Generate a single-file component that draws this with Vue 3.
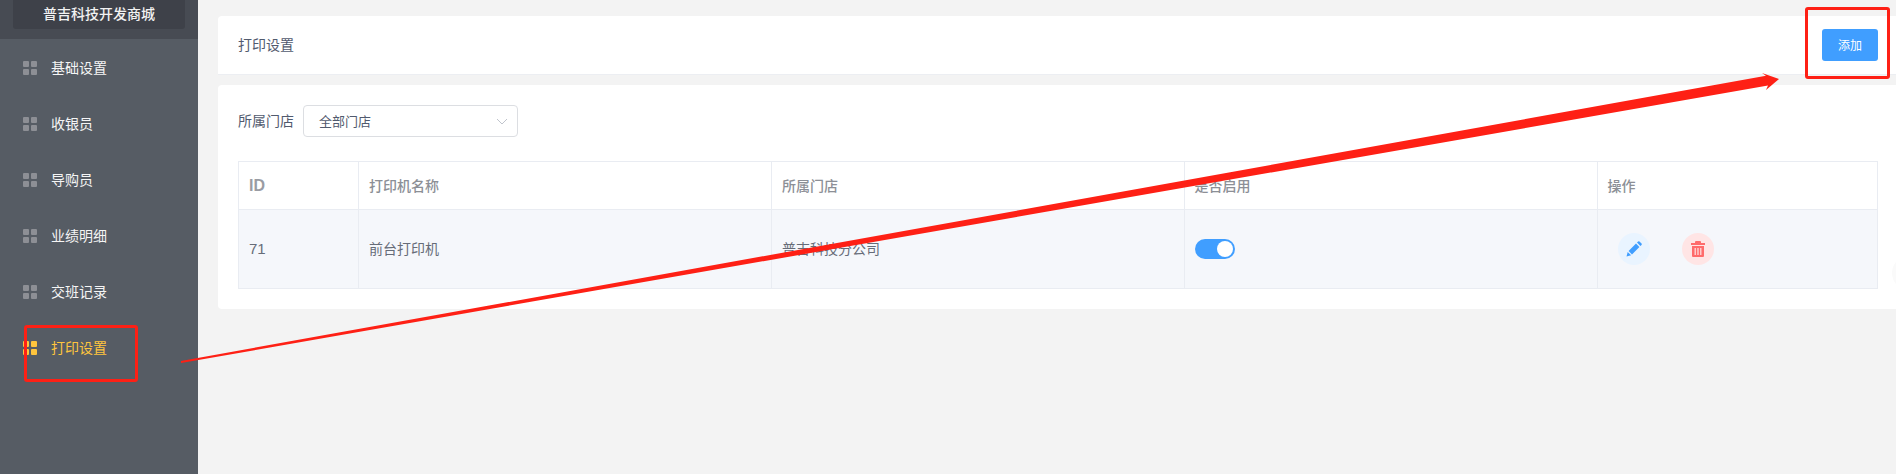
<script setup>
const menu = [
  { label: '基础设置' },
  { label: '收银员' },
  { label: '导购员' },
  { label: '业绩明细' },
  { label: '交班记录' },
  { label: '打印设置', active: true }
]
const heads = ['ID', '打印机名称', '所属门店', '是否启用', '操作']
</script>

<template>
  <div class="page">
    <aside class="sidebar">
      <div class="brand-bar"><div class="brand">普吉科技开发商城</div></div>
      <nav class="menu">
        <div v-for="m in menu" :key="m.label" class="menu-item" :class="{ active: m.active }">
          <span class="grid-icon"><i></i><i></i><i></i><i></i></span>
          <span class="menu-label">{{ m.label }}</span>
        </div>
      </nav>
    </aside>
    <main class="main">
      <header class="title-card">
        <span class="title-text">打印设置</span>
        <button class="add-btn">添加</button>
      </header>
      <section class="panel">
        <div class="filter">
          <label class="lift">所属门店</label>
          <div class="select">
            <span class="lift">全部门店</span>
            <svg width="12" height="7" viewBox="0 0 12 7"><path d="M1 1l5 5 5-5" fill="none" stroke="#c0c4cc" stroke-width="1"/></svg>
          </div>
        </div>
        <div class="table">
          <div v-for="h in heads" :key="h" class="cell head" :class="{ idh: h === 'ID' }"><span class="lift">{{ h }}</span></div>
          <div class="cell body num"><span class="lift">71</span></div>
          <div class="cell body"><span class="lift">前台打印机</span></div>
          <div class="cell body"><span class="lift">普吉科技分公司</span></div>
          <div class="cell body"><span class="switch"><i></i></span></div>
          <div class="cell body actions">
            <span class="round edit">
              <svg width="16" height="16" viewBox="0 0 16 16"><path d="M0.5 15.5l1.2-4.6 3.4 3.4zM2.6 10L10 2.6l3.4 3.4L6 13.4zM11 1.6l1.1-1.1a1 1 0 0 1 1.4 0l2 2a1 1 0 0 1 0 1.4L14.4 5z" fill="#409eff"/></svg>
            </span>
            <span class="round del">
              <svg width="14" height="16" viewBox="0 0 14 16"><path d="M5 0h4a1 1 0 0 1 1 1v1h4v2H0V2h4V1a1 1 0 0 1 1-1zM1 5h12v10a1 1 0 0 1-1 1H2a1 1 0 0 1-1-1zM3.6 7v7h1.2V7zM6.4 7v7h1.2V7zM9.2 7v7h1.2V7z" fill-rule="evenodd" fill="#ff6b6b"/></svg>
            </span>
          </div>
        </div>
      </section>
    </main>

    <!-- red annotations drawn over the screenshot -->
    <div class="mark mark-menu"></div>
    <div class="mark mark-btn"></div>
    <svg class="arrow" width="1896" height="474" viewBox="0 0 1896 474">
      <polygon points="181,361 1766,75.8 1762,73 1779,79 1766,90 1768,85.6 181,363" fill="#fe2015"/>
    </svg>
    <span class="edge-shadow"></span>
  </div>
</template>

<style scoped>
.page {
  position: relative;
  display: flex;
  width: 1896px;
  height: 474px;
  overflow: hidden;
  background: #f3f3f3;
  font-family: "Noto Sans CJK SC", "Noto Sans", sans-serif;
  font-size: 14px;
  color: #515a6e;
}
.lift {
  display: block;
  margin-top: -2px;
}
.title-text {
  display: block;
  margin-top: -3px;
}
.sidebar {
  width: 198px;
  flex: none;
  background: #565c64;
  color: #fff;
}
.brand-bar {
  height: 39px;
  padding: 0 13px;
  box-sizing: border-box;
  background: #474b53;
}
.brand {
  height: 29px;
  line-height: 27px;
  text-align: center;
  font-weight: 500;
  background: #3e4149;
  border-radius: 0 0 3px 3px;
  color: #f2f2f2;
}
.menu {
  padding-top: 1px;
}
.menu-item {
  display: flex;
  align-items: center;
  gap: 14px;
  height: 56px;
  padding-left: 23px;
  color: #f5f5f5;
}
.menu-label {
  margin-top: -2px;
}
.menu-item.active {
  color: #ffc53d;
}
.grid-icon {
  display: grid;
  grid-template-columns: 6px 6px;
  grid-template-rows: 6px 6px;
  gap: 2px;
  width: 14px;
  height: 14px;
}
.grid-icon i {
  background: #8d8f95;
  border-radius: 1px;
}
.active .grid-icon i {
  background: #ffc53d;
}
.main {
  flex: 1;
  min-width: 0;
  padding: 16px 0 0 20px;
}
.title-card {
  display: flex;
  align-items: center;
  justify-content: space-between;
  height: 59px;
  box-sizing: border-box;
  padding: 0 18px 0 20px;
  background: #fff;
  border-bottom: 1px solid #eceef2;
  border-radius: 4px 0 0 0;
  color: #515a6e;
}
.add-btn {
  width: 56px;
  height: 32px;
  border: 0;
  padding: 0 0 2px;
  border-radius: 3px;
  background: #409eff;
  color: #fff;
  font: inherit;
  font-size: 12px;
}
.panel {
  margin-top: 10px;
  height: 224px;
  box-sizing: border-box;
  padding: 20px 18px 0 20px;
  background: #fff;
  border-radius: 4px 0 0 4px;
}
.filter {
  display: flex;
  align-items: center;
  gap: 9px;
  height: 32px;
}
.select {
  display: flex;
  align-items: center;
  justify-content: space-between;
  width: 215px;
  height: 32px;
  box-sizing: border-box;
  padding: 0 9px 0 15px;
  border: 1px solid #dcdee2;
  border-radius: 4px;
  font-size: 13px;
}
.table {
  display: grid;
  grid-template-columns: 120px 413px 412.5px 413px 1fr;
  grid-template-rows: 48px 79px;
  margin-top: 24px;
  border: 1px solid #e9ecf2;
  border-width: 1px 0 0 1px;
}
.cell {
  display: flex;
  align-items: center;
  padding-left: 10px;
  border-right: 1px solid #e9ecf2;
  border-bottom: 1px solid #e9ecf2;
  box-sizing: border-box;
}
.head {
  font-weight: 500;
  color: #8c8f96;
  background: #fff;
}
.idh {
  font-family: "Liberation Sans", sans-serif;
  font-weight: 700;
  font-size: 16px;
  color: #9a9ca3;
  padding-top: 2px;
}
.body {
  background: #f5f7fb;
  color: #666c78;
}
.num {
  font-family: "Liberation Sans", sans-serif;
  font-size: 15px;
}
.switch {
  position: relative;
  display: block;
  width: 40px;
  height: 20px;
  border-radius: 10px;
  background: #409eff;
}
.switch i {
  position: absolute;
  top: 2px;
  right: 2px;
  width: 16px;
  height: 16px;
  border-radius: 50%;
  background: #fff;
}
.actions {
  gap: 32px;
  padding-left: 20px;
}
.round {
  display: flex;
  align-items: center;
  justify-content: center;
  width: 32px;
  height: 32px;
  border-radius: 50%;
}
.edit {
  background: #e9f4ff;
}
.del {
  background: #ffe5e5;
}
.mark {
  position: absolute;
  box-sizing: border-box;
  border: 3px solid #fe2015;
  border-radius: 3px;
}
.mark-menu {
  left: 24px;
  top: 325px;
  width: 114px;
  height: 57px;
}
.mark-btn {
  left: 1805px;
  top: 7px;
  width: 85px;
  height: 72px;
}
.arrow {
  position: absolute;
  left: 0;
  top: 0;
  pointer-events: none;
}
.edge-shadow {
  position: absolute;
  left: 1892px;
  top: 256px;
  width: 34px;
  height: 34px;
  border-radius: 50%;
  background: #fafafa;
}
</style>
